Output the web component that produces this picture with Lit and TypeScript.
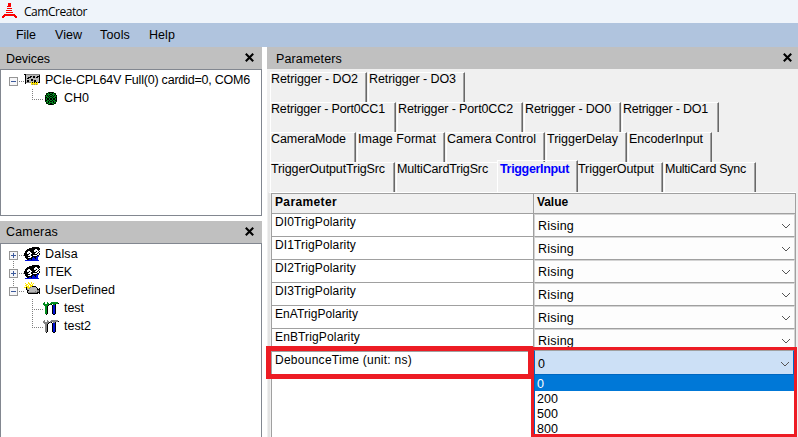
import { LitElement, html, svg, css } from "lit";
import { customElement, property } from "lit/decorators.js";

const palette: Record<string, string> = {
  K: "#000", G: "#008a1c", B: "#0010d8", W: "#fff", S: "#b8b8b8", D: "#808080",
  Y: "#ffe600", L: "#d8e4f8", N: "#004800", R: "#fa0000",
};

const icons: Record<string, string[]> = {
  logo: [
    "......RRR......",
    "......RRR......",
    "......RRR......",
    ".....RRRR......",
    "...............",
    ".....RRRRR.....",
    "...............",
    "....RRRRRR.....",
    "...............",
    "....RRRRRRR....",
    "...............",
    "..RRRRRRRRRRR..",
    ".RRRRRRRRRRRRR.",
    "RRR.........RRR",
    "RR...........RR",
  ],
  card: [
    "", "", "",
    "KKDDDDDDDDDDDDDD",
    ".KSSSSSSSSSSSSSK",
    ".KSSSSKKSKKSSKKK",
    ".KSSKKKSSKKSKKSK",
    ".KSKKSSSSSSSSSSK",
    ".KSSSSSKKSSSSSSK",
    ".KSKKSSKKSKKSSSK",
    ".KSKKSSSSSKKSSSK",
    ".KDDDDDYKYKYKYKK",
    ".K.....YYYYYYY..",
    ".......YDYDYDY..",
  ],
  channel: [
    "", "", "",
    ".....NKKKKN.....",
    "...NKGKGGKGKN...",
    "...KGGGKKGGGK...",
    "..KGKGKGGKGKGK..",
    "..NGGKGKKGKGGN..",
    "..KKGGKGGKGGKK..",
    "..KGKKGKKGKKGK..",
    "..KGKKGKKGKKGK..",
    "..KKGGKGGKGGKK..",
    "..NGGKGKKGKGGN..",
    "...KGKGGGGKGK...",
    "...NKGGKKGGKN...",
    ".....NKKKKN.....",
  ],
  vendor: [
    "", "",
    "........KKKKKKK.",
    ".....KKKKKKKKKKK",
    "...KKKKKKKKWWKKK",
    "..KKKKKKKKWWWWKW",
    ".KKKWWKKKKWLKWWK",
    ".KKWWWWKKKKKWWK.",
    "KKKWLKWWKKKWWKWK",
    "KKKKKWWKKKKKKWWK",
    "KKKKWWLKKWWWWKK.",
    ".KKKKKWWKKKKKBB.",
    ".KKKWWWKKBKKBB..",
    "..KKKKKKBBBKBB..",
    "...KKBBKBBBBBB..",
    ".BBBBBBBBBBBBBB.",
  ],
  camera: [
    "",
    "....Y..Y",
    ".Y..YY.Y.Y",
    "..YYWYYWY",
    ".YYWYWYYY",
    "..YYYWYYKKKK",
    "YYKYYYDSSSSSK...",
    "..KSYDSSSSSSSK.K",
    "..KDSSSSSSSSSKKK",
    "...KKSSSSSSSSDDK",
    "...KSSSSSSSDSDDK",
    "...KDDDDDDDDDKKK",
    "....KKKKKKKKKK.K",
  ],
  tools: [
    "", "", "",
    ".G..G...GGGGGGG.",
    "GG..GG.GGGGGGGGK",
    "GGGGGGKGK.GGK...",
    ".GGGGK...KBBK...",
    "..GGK....KBBK...",
    "..GGK....KBBK...",
    "..GGK....KBBK...",
    "..GGK....KBBK...",
    "..GGK....KBBK...",
    "..GGK....KBBK...",
    "..GGK....KBBK...",
    "..GGK....KBBK...",
    "...K......KK....",
  ],
};
icons.toolsOff = icons.tools.map((r) => r.replace(/G/g, "D"));

const pixels = (name: string) => icons[name].map((row, y) =>
  [...row].map((c, x) => palette[c]
    ? svg`<rect x=${x} y=${y} width="1" height="1" fill=${palette[c]}></rect>` : null));

/** A line of text spread or tightened to a given advance width. */
@customElement("fit-text")
class FitText extends LitElement {
  @property() text = "";
  @property({ type: Number }) width = 0;
  static styles = css`
    :host { display: block; white-space: pre; }
    span { display: inline-block; }
  `;
  render() { return html`<span>${this.text}</span>`; }
  updated() {
    const span = this.renderRoot.querySelector("span")!;
    span.style.letterSpacing = "0";
    const natural = span.getBoundingClientRect().width;
    if (this.width) span.style.letterSpacing = `${(this.width - natural) / this.text.length}px`;
  }
}

const fit = (text: string, width: number) => html`<fit-text .text=${text} .width=${width}></fit-text>`;

interface Node { label: string; w: number; icon: string; box?: "+" | "-"; up?: boolean; down?: boolean; }

@customElement("tree-view")
class TreeView extends LitElement {
  @property({ attribute: false }) nodes: Node[] = [];
  static styles = css`
    :host { display: block; border: 1px solid #828790; background: #fff; padding-top: 1px; box-sizing: border-box; overflow: hidden; }
    .row { display: flex; height: 18px; line-height: 18px; align-items: stretch; }
    svg { flex: none; display: block; shape-rendering: crispEdges; }
    .dots { stroke: #808080; stroke-dasharray: 1 1; fill: none; }
    .box { fill: #f6f6f8; stroke: #959595; }
    .sign { stroke: #3c5a9c; fill: none; }
    fit-text { margin-left: 5px; }
  `;
  render() {
    return this.nodes.map((n) => {
      const w = n.box ? 24 : 43;
      const x = n.box ? 13.5 : 32.5;
      return html`<div class="row">
        <svg width=${w - 1} height="18" viewBox="1 0 ${w - 1} 18">
          ${n.up ? svg`<path class="dots" d="M${x} 0V${n.box ? 6 : 11}"></path>` : null}
          ${n.down ? svg`<path class="dots" d="M${x} ${n.box ? 16 : 10}V18"></path>` : null}
          <path class="dots" d="M${n.box ? 19 : 34} 10.5H${w}"></path>
          ${n.box ? svg`<rect class="box" x="9.5" y="6.5" width="8" height="8"></rect>
            <path class="sign" d="M11 10.5H16${n.box === "+" ? "M13.5 8V13" : ""}"></path>` : null}
        </svg>
        <svg width="16" height="18" viewBox="0 0 16 18">${pixels(n.icon)}</svg>
        ${fit(n.label, n.w)}
      </div>`;
    });
  }
}

const devices: Node[] = [
  { label: "PCIe-CPL64V Full(0) cardid=0, COM6", w: 205, icon: "card", box: "-" },
  { label: "CH0", w: 25, icon: "channel", up: true },
];
const cameras: Node[] = [
  { label: "Dalsa", w: 33, icon: "vendor", box: "+", down: true },
  { label: "ITEK", w: 27, icon: "vendor", box: "+", up: true, down: true },
  { label: "UserDefined", w: 70, icon: "camera", box: "-", up: true },
  { label: "test", w: 20, icon: "tools", up: true, down: true },
  { label: "test2", w: 27, icon: "toolsOff", up: true },
];

// label, text width, tab width
const tabs: [string, number, number][][] = [
  [["Retrigger - DO2", 87, 98], ["Retrigger - DO3", 87, 98]],
  [["Retrigger - Port0CC1", 114, 127], ["Retrigger - Port0CC2", 115, 127], ["Retrigger - DO0", 86, 98], ["Retrigger - DO1", 85, 98]],
  [["CameraMode", 75, 87], ["Image Format", 78, 89], ["Camera Control", 89, 100], ["TriggerDelay", 71, 82], ["EncoderInput", 74, 85]],
  [["TriggerOutputTrigSrc", 114, 126], ["MultiCardTrigSrc", 91, 101], ["TriggerInput", 69, 81], ["TriggerOutput", 76, 86], ["MultiCard Sync", 81, 93]],
];
const rows: [string, number][] = [
  ["DI0TrigPolarity", 81], ["DI1TrigPolarity", 81], ["DI2TrigPolarity", 81],
  ["DI3TrigPolarity", 81], ["EnATrigPolarity", 83], ["EnBTrigPolarity", 85],
];

@customElement("app-root")
class AppRoot extends LitElement {
  static styles = css`
    :host { display: flex; flex-direction: column; width: 798px; height: 437px; overflow: hidden; position: relative;
      background: #fff; color: #000; font: 12.5px "Liberation Sans", Arial, sans-serif; }
    .title { height: 23px; background: #eff4fa; display: flex; gap: 7px; padding-left: 2px; flex: none; font: 12px/24px "Open Sans", "Noto Sans", sans-serif; }
    .title svg { display: block; margin-top: 3px; flex: none; shape-rendering: crispEdges; }
    .menu { height: 24px; background: #b0c4de; display: flex; padding-left: 16px; line-height: 24px; flex: none; }
    .m1 { width: 39px; } .m2 { width: 45px; } .m3 { width: 49px; }
    .main { display: flex; flex: 1; min-height: 0; }
    .left { width: 262px; margin-right: 5px; display: flex; flex-direction: column; flex: none; }
    .left tree-view { flex: none; height: 147px; margin-bottom: 5px; }
    .left tree-view.cams { flex: 1; margin-bottom: -2px; }
    .head { height: 22px; background: #c0c0c0; display: flex; justify-content: space-between; line-height: 25px; padding: 0 8px 0 6px; flex: none; }
    .head.low { line-height: 23px; }
    .right .head { padding: 0 6px 0 9px; }
    .head svg { display: block; margin-top: 6px; }
    .right { flex: 1; background: #f0f0f0; display: flex; flex-direction: column; min-width: 0; }
    .tabs { padding: 3px 0 0 3px; height: 123px; box-sizing: border-box; flex: none; }
    .strip { display: flex; height: 30px; }
    .cell { box-sizing: border-box; flex: none; padding-right: 1px; }
    .cell.flush { padding-right: 0; }
    .tab { box-sizing: border-box; height: 30px; border-left: 1px solid #fff; border-top: 1px solid #fff;
      border-right: 1px solid #696969; box-shadow: inset -1px 0 #a0a0a0; line-height: 13px; }
    .tab.on { height: 32px; margin-top: -2px; padding: 2px 0 0 2px; color: #00f; font-weight: bold; }
    .tab.pre { border-right: 0; box-shadow: none; }
    .tab.post { border-left: 0; }
    .grid { flex: 1; margin: 0 2px 0 1px; border-top: 1px solid #fff; border-left: 2px solid #e3e3e3; }
    .table { box-sizing: border-box; margin: 0 0 0 1px; border: 1px solid #a0a0a0; border-bottom: 0; height: 244px; display: flex; background: #fff; width: 525px; }
    .col1 { width: 261px; border-right: 1px solid #a0a0a0; }
    .col2 { flex: 1; }
    .th { height: 19px; background: #f0f0f0; border-bottom: 1px solid #a0a0a0; font-weight: bold; font-size: 12px; line-height: 17px; padding-left: 3px; }
    .td { height: 22px; border-bottom: 1px solid #a0a0a0; line-height: 17px; padding-left: 3px; font-size: 12px; }
    .td.last { border: 0; }
    .combo { box-sizing: border-box; height: 23px; border: 1px solid #d4d4d4; border-bottom-color: #a0a0a0; background: #fdfdfd; display: flex; justify-content: space-between; align-items: center; padding: 1px 3px 0 3px; line-height: 19px; }
    .mark { position: absolute; box-sizing: border-box; border: 5px solid #ed1c24; left: 266px; top: 346px; width: 267px; height: 33px; }
    .drop { position: absolute; box-sizing: border-box; border: 3px solid #ed1c24; left: 531px; top: 347px; width: 266px; height: 90px; background: #fff; }
    .sel { box-sizing: border-box; height: 25px; border: 1px solid #0067c0; border-top-color: #a0a0a0; background: #cce0f6; display: flex; justify-content: space-between; align-items: center; padding: 2px 3px 0 3px; }
    .list { border-left: 1px solid #0067c0; height: 59px; }
    .opt { height: 15px; line-height: 16px; padding-left: 2px; }
    .opt.hot { background: #0078d7; color: #fff; height: 16px; line-height: 18px; }
  `;

  private close() {
    return html`<svg width="9" height="9" viewBox="0 0 9 9"><path d="M0.8 0.8L8.2 8.2M8.2 0.8L0.8 8.2" stroke="#000" stroke-width="2.1"></path></svg>`;
  }
  private chevron() {
    return html`<svg width="10" height="6" viewBox="0 0 10 6"><path d="M1 1L5 5L9 1" fill="none" stroke="#555" stroke-width="1"></path></svg>`;
  }

  render() {
    return html`
      <div class="title">
        <svg width="15" height="15" viewBox="0 0 15 15">${pixels("logo")}</svg>${fit("CamCreator", 63)}
      </div>
      <div class="menu">
        <div class="m1">${fit("File", 20)}</div><div class="m2">${fit("View", 27)}</div>
        <div class="m3">${fit("Tools", 30)}</div>${fit("Help", 26)}
      </div>
      <div class="main">
        <div class="left">
          <div class="head">${fit("Devices", 44)}${this.close()}</div>
          <tree-view .nodes=${devices}></tree-view>
          <div class="head low">${fit("Cameras", 52)}${this.close()}</div>
          <tree-view class="cams" .nodes=${cameras}></tree-view>
        </div>
        <div class="right">
          <div class="head">${fit("Parameters", 66)}${this.close()}</div>
          <div class="tabs">
            ${tabs.map((strip) => html`<div class="strip">${strip.map(([label, w, tw]) => {
              const kind = { TriggerInput: "on", MultiCardTrigSrc: "pre", TriggerOutput: "post" }[label] ?? "";
              const flush = kind === "on" || kind === "pre" ? "flush" : "";
              return html`<div class="cell ${flush}" style="width:${tw}px">
                <div class="tab ${kind}">${fit(label, w)}</div></div>`;
            })}</div>`)}
          </div>
          <div class="grid"><div class="table">
            <div class="col1">
              <div class="th">${fit("Parameter", 62)}</div>
              ${rows.map(([label, w]) => html`<div class="td">${fit(label, w)}</div>`)}
              <div class="td last">${fit("DebounceTime (unit: ns)", 137)}</div>
            </div>
            <div class="col2">
              <div class="th">${fit("Value", 31)}</div>
              ${rows.map(() => html`<div class="combo">${fit("Rising", 36)}${this.chevron()}</div>`)}
            </div>
          </div></div>
        </div>
      </div>
      <div class="mark"></div>
      <div class="drop">
        <div class="sel">${fit("0", 7)}${this.chevron()}</div>
        <div class="list">
          <div class="opt hot">${fit("0", 7)}</div>
          ${["200", "500", "800"].map((v) => html`<div class="opt">${fit(v, 21)}</div>`)}
        </div>
      </div>`;
  }
}
